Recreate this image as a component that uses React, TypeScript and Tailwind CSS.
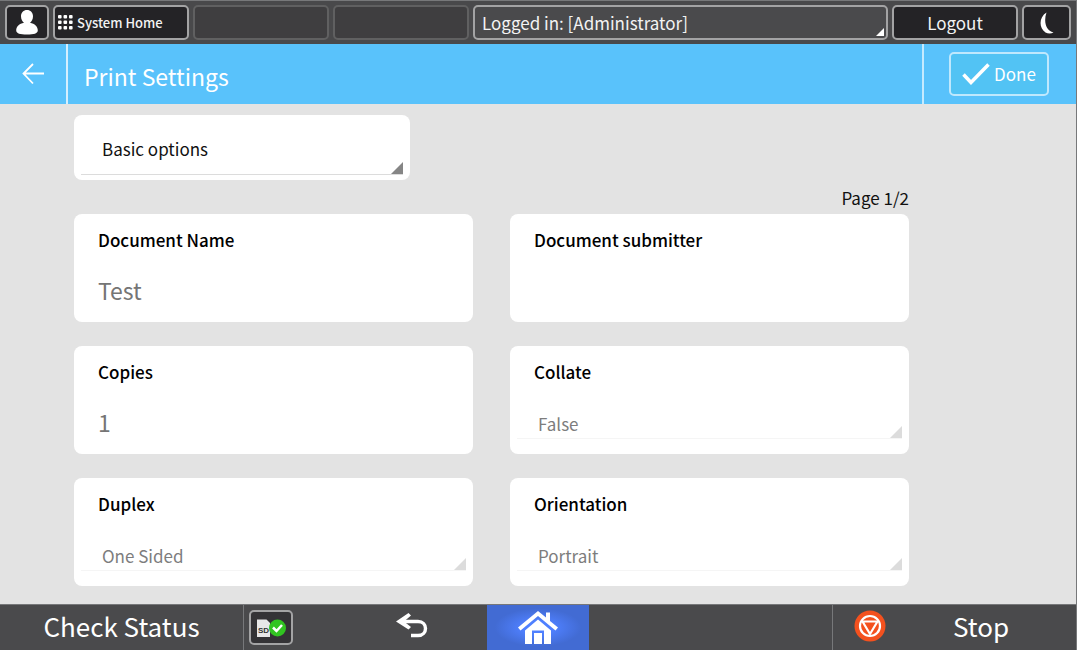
import React, { useId } from "react";

function Corner({ className }: { className: string }) {
  return (
    <svg viewBox="0 0 12 12" className={className} aria-hidden="true">
      <path d="M12 0V12H0Z" fill="currentColor" />
    </svg>
  );
}

const topButton =
  "flex h-[35px] shrink-0 items-center rounded-[5px] border-2 border-[#a3a3a4] bg-[#242326]";

function TopBar() {
  return (
    <header className="flex h-11 items-center gap-1 border-t border-[#77787a] bg-[#49494b] px-[5px] text-[#f3f3f3]">
      <button aria-label="User" className={`${topButton} w-11 justify-center`}>
        <svg viewBox="0 0 22 25" className="h-[25px] w-[22px]" aria-hidden="true">
          <path
            d="M11 0C14.500 0 17 2.600 17 6.200C17 9.500 15.500 11.500 14 12.800C18.800 13.600 21.800 16.800 21.800 20.200C21.800 23.600 18 24.500 11 24.500S.2 23.600 .2 20.200C.2 16.800 3.200 13.600 8 12.800C6.500 11.500 5 9.500 5 6.200C5 2.600 7.500 0 11 0Z"
            fill="white"
          />
        </svg>
      </button>
      <button className={`${topButton} w-[136px] gap-1 pl-[3px] text-[13px] font-medium whitespace-nowrap`}>
        <svg viewBox="0 0 15 15" className="size-[15px] shrink-0" fill="white" aria-hidden="true">
          {[0, 5.5, 11].map((y) =>
            [0, 5.5, 11].map((x) => (
              <rect key={`${x}-${y}`} x={x} y={y} width="3.6" height="3.6" rx="1" />
            )),
          )}
        </svg>
        <span>System Home</span>
      </button>
      <div className="h-[35px] w-[136px] rounded-[5px] border-2 border-[#606061] bg-[#3f3e40]" />
      <div className="h-[35px] w-[136px] rounded-[5px] border-2 border-[#606061] bg-[#3f3e40]" />
      <button className="relative flex h-[35px] flex-1 items-center rounded-[5px] border-2 border-[#a3a3a4] bg-[#4a4a4c] px-[7px] text-[17px]">
        Logged in: [Administrator]
        <Corner className="absolute right-[2px] bottom-[2px] size-2 text-white" />
      </button>
      <button className={`${topButton} w-[126px] justify-center text-[17px]`}>Logout</button>
      <button aria-label="Energy saver" className={`${topButton} w-[49px] justify-center`}>
        <svg viewBox="0 0 14 22" className="h-[22px] w-[14px]" aria-hidden="true">
          <path d="M6.500 .5C-1 5-1.500 16 5.500 20.500C8 22 11.500 21.800 13.500 20.500C5.500 18.500 3.500 9 6.500 .5Z" fill="white" />
        </svg>
      </button>
    </header>
  );
}

function TitleBar() {
  return (
    <div className="flex h-[60px] items-stretch bg-[#59c2fb] text-white">
      <button aria-label="Back" className="flex w-[66px] items-center justify-center">
        <svg viewBox="0 0 22 22" className="size-[22px]" fill="none" stroke="white" strokeWidth="1.800" aria-hidden="true">
          <path d="M11 1L1.500 10.500L11 20.500M1.500 10.500H22" />
        </svg>
      </button>
      <h1 className="flex flex-1 items-center border-l-2 border-[#d5effe] pt-1 pl-4 text-[23px] leading-8">
        Print Settings
      </h1>
      <div className="flex w-[154px] items-center border-l-2 border-[#c5eafe] pl-[25px]">
        <button className="flex h-11 w-[100px] items-center justify-center gap-1 rounded-[5px] border-2 border-[#bfe8fd] bg-[#52c3f4] text-[17px]">
          <svg viewBox="0 0 28 22" className="h-[22px] w-7" fill="none" stroke="white" strokeWidth="3.500" aria-hidden="true">
            <path d="M1.500 11.500L9 19.500L26.500 1.500" />
          </svg>
          Done
        </button>
      </div>
    </div>
  );
}

function TextCard({ label, value }: { label: string; value: string }) {
  const id = useId();
  return (
    <div className="flex h-[108px] flex-col rounded-lg bg-white px-6 pt-3">
      <label htmlFor={id} className="text-[17px] leading-7 font-medium text-black">
        {label}
      </label>
      <input
        id={id}
        defaultValue={value}
        className="mt-[18px] h-9 w-full bg-transparent text-[23px] leading-9 text-[#757575] outline-none"
      />
    </div>
  );
}

function SelectCard({ label, options }: { label: string; options: string[] }) {
  const id = useId();
  return (
    <div className="flex h-[108px] flex-col rounded-lg bg-white px-[7px] pt-3">
      <label htmlFor={id} className="pl-[17px] text-[17px] leading-7 font-medium text-black">
        {label}
      </label>
      <div className="relative mt-[21px] h-8 border-b border-[#f5f5f5]">
        <select
          id={id}
          className="h-full w-full appearance-none bg-transparent pt-[3px] pl-[21px] text-[17px] text-[#7d7d7d] outline-none"
        >
          {options.map((o) => (
            <option key={o}>{o}</option>
          ))}
        </select>
        <Corner className="pointer-events-none absolute right-0 bottom-0 size-3 text-[#dcdcdc]" />
      </div>
    </div>
  );
}

function Settings() {
  return (
    <main className="flex-1 bg-[#e3e3e3] pt-[11px] pr-[167px] pb-[18px] pl-[74px]">
      <div className="h-[65px] w-[336px] rounded-lg bg-white px-[7px] pt-3">
        <div className="relative h-12 border-b border-[#dcdcdc]">
          <select
            aria-label="Options"
            className="h-11 w-full appearance-none bg-transparent pl-[21px] text-[17px] text-[#111] outline-none"
          >
            <option>Basic options</option>
          </select>
          <Corner className="pointer-events-none absolute right-0 bottom-0 size-3 text-[#858585]" />
        </div>
      </div>
      <p className="mt-1 h-[30px] text-right text-[17px] leading-7 text-[#111]">Page 1/2</p>
      <div className="grid grid-cols-2 gap-x-[37px] gap-y-6">
        <TextCard label="Document Name" value="Test" />
        <TextCard label="Document submitter" value="" />
        <TextCard label="Copies" value="1" />
        <SelectCard label="Collate" options={["False", "True"]} />
        <SelectCard label="Duplex" options={["One Sided", "Two Sided"]} />
        <SelectCard label="Orientation" options={["Portrait", "Landscape"]} />
      </div>
    </main>
  );
}

function BottomBar() {
  return (
    <footer className="flex h-[46px] border-t border-[#77787a] bg-[#4a4a4c] text-[26px] text-white">
      <div className="flex flex-1 items-center">
        <button className="h-full w-[244px] border-r border-[#77787a] pb-1 leading-10 whitespace-nowrap">
          Check Status
        </button>
        <button
          aria-label="SD card status"
          className="ml-[5px] flex h-[35px] w-11 items-center justify-center rounded-[5px] border-2 border-[#a3a3a4] bg-[#343336]"
        >
          <svg viewBox="0 0 30 20" className="h-5 w-[30px]" aria-hidden="true">
            <path d="M1 1.500H10.500L14 5V19H1Z" fill="#e8e8e8" />
            <text x="2" y="14.500" fontSize="8" fontWeight="700" fill="#333" fontFamily="Liberation Sans, sans-serif">
              SD
            </text>
            <circle cx="21.500" cy="10" r="8.500" fill="#31c421" />
            <path d="M17 9.500L20.500 13L26 7" fill="none" stroke="white" strokeWidth="2.500" />
          </svg>
        </button>
        <button aria-label="Return" className="ml-auto flex h-full w-[150px] items-center justify-center pb-1">
          <svg viewBox="0 0 32 25" className="h-[25px] w-8" aria-hidden="true">
            <path d="M8 8.500H22C32 8.500 32 22.500 22 22.500H15" fill="none" stroke="white" strokeWidth="3.400" />
            <path d="M12.500 0L15 2.500L8 8.500L15 14L12.500 16.500L0 8.500Z" fill="white" />
          </svg>
        </button>
      </div>
      <button
        aria-label="Home"
        className="flex w-[102px] items-center justify-center bg-radial from-[#4f80ff] from-20% to-[#426bd3] to-60%"
      >
        <svg viewBox="0 0 40 33" className="h-[33px] w-10" aria-hidden="true">
          <path d="M0 16.500L20 0L28 6.600V1.500H32V10L40 16.500L37.500 19.500L20 5L2.500 19.500Z" fill="white" />
          <path fillRule="evenodd" d="M20 8.500L33 19.500V33H26V19.500H14V33H7V19.500Z" fill="white" />
          <path d="M16 22H24V33H16Z" fill="white" />
        </svg>
      </button>
      <div className="flex flex-1 justify-end">
        <button className="flex w-[244px] items-center border-l border-[#77787a] pb-1 pl-[21px] leading-10">
          <svg viewBox="0 0 32 32" className="size-8" aria-hidden="true">
            <circle cx="16" cy="16" r="15.500" fill="#f4511e" />
            <circle cx="16" cy="16" r="10" fill="none" stroke="white" strokeWidth="2.200" />
            <path d="M8.500 11.500H23.500L16 24Z" fill="none" stroke="white" strokeWidth="2.200" strokeLinejoin="round" />
          </svg>
          <span className="flex-1 text-center">Stop</span>
        </button>
      </div>
    </footer>
  );
}

export default function App() {
  return (
    <div className="flex min-h-screen flex-col border-r border-[#77787a] bg-[#e3e3e3] font-['Noto_Sans_CJK_JP','Noto_Sans',sans-serif]">
      <TopBar />
      <TitleBar />
      <Settings />
      <BottomBar />
    </div>
  );
}
